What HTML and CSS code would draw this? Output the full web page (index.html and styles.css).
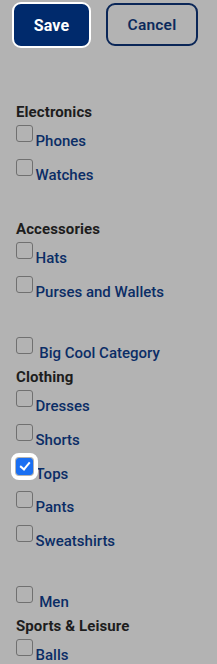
FILE: index.html
```html
<!DOCTYPE html>
<html>
<head>
<meta charset="utf-8">
<link rel="stylesheet" href="styles.css">
</head>
<body>
<div class="page">
  <div class="actions">
    <button class="btn btn-save">Save</button>
    <button class="btn btn-cancel">Cancel</button>
  </div>

  <div class="group">
    <div class="heading">Electronics</div>
    <label class="item"><input type="checkbox" class="cb"><span>Phones</span></label>
    <label class="item"><input type="checkbox" class="cb"><span>Watches</span></label>
  </div>

  <div class="group">
    <div class="heading">Accessories</div>
    <label class="item"><input type="checkbox" class="cb"><span>Hats</span></label>
    <label class="item"><input type="checkbox" class="cb"><span>Purses and Wallets</span></label>
  </div>

  <label class="solo"><input type="checkbox" class="cb"> <span>Big Cool Category</span></label>
  <div class="group group-tight">
    <div class="heading">Clothing</div>
    <label class="item"><input type="checkbox" class="cb"><span>Dresses</span></label>
    <label class="item"><input type="checkbox" class="cb"><span>Shorts</span></label>
    <label class="item"><input type="checkbox" class="cb cb-focus" checked><span>Tops</span></label>
    <label class="item"><input type="checkbox" class="cb"><span>Pants</span></label>
    <label class="item"><input type="checkbox" class="cb"><span>Sweatshirts</span></label>
  </div>

  <label class="solo"><input type="checkbox" class="cb"> <span>Men</span></label>
  <div class="group group-tight">
    <div class="heading">Sports &amp; Leisure</div>
    <label class="item"><input type="checkbox" class="cb"><span>Balls</span></label>
  </div>
</div>
</body>
</html>
```
FILE: styles.css
```css
html, body {
  margin: 0;
  padding: 0;
  background: #b3b3b3;
}
body {
  font-family: Roboto, "Liberation Sans", sans-serif;
  overflow: hidden;
}
.page {
  padding: 0 0 0 16px;
  height: 664px;
}
.actions {
  display: flex;
  align-items: flex-start;
  gap: 15px;
  margin-left: -4px;
  padding-top: 2px;
  height: 75.3px;
  box-sizing: border-box;
}
.btn {
  font-family: Roboto, "Liberation Sans", sans-serif;
  font-weight: 700;
  border-radius: 9px;
  box-sizing: border-box;
  cursor: pointer;
  padding: 0;
}
.btn-save {
  width: 79px;
  height: 46px;
  font-size: 16px;
  letter-spacing: 0.2px;
  background: #002a6c;
  color: #ffffff;
  border: 2px solid #ffffff;
}
.btn-cancel {
  margin-top: 1px;
  width: 92px;
  height: 43px;
  font-size: 15.5px;
  letter-spacing: 0.2px;
  background: transparent;
  color: #0c2a5c;
  border: 2px solid #0a2657;
  font-weight: 600;
}
.group {
  margin-top: 23.5px;
}
.group-tight {
  margin-top: 0;
}
.heading {
  font-size: 15px;
  font-weight: 700;
  color: #1d1d1d;
  line-height: 26.2px;
  height: 26.2px;
  letter-spacing: 0.1px;
}
.item, .solo {
  display: block;
  font-size: 15px;
  font-weight: 500;
  color: #0b2d66;
  white-space: nowrap;
}
.item {
  line-height: 33.8px;
  height: 33.8px;
}
.solo {
  margin-top: 27px;
  line-height: 24px;
  height: 27px;
}
.cb {
  -webkit-appearance: none;
  appearance: none;
  display: inline-block;
  width: 17px;
  height: 17px;
  margin: 0 2.5px 4px 0;
  vertical-align: baseline;
  box-sizing: border-box;
  border: 1.5px solid #707070;
  border-radius: 3px;
  background: transparent;
  position: relative;
}
.cb:checked {
  background: #1a6ff2;
  border-color: #1a6ff2;
}
.cb:checked::after {
  content: "";
  position: absolute;
  left: 4.5px;
  top: 1.5px;
  width: 4px;
  height: 8px;
  border: solid #ffffff;
  border-width: 0 2.5px 2.5px 0;
  transform: rotate(40deg);
}
.cb-focus {
  outline: 4px solid #ffffff;
  outline-offset: 1px;
  border-radius: 3px;
}
```
